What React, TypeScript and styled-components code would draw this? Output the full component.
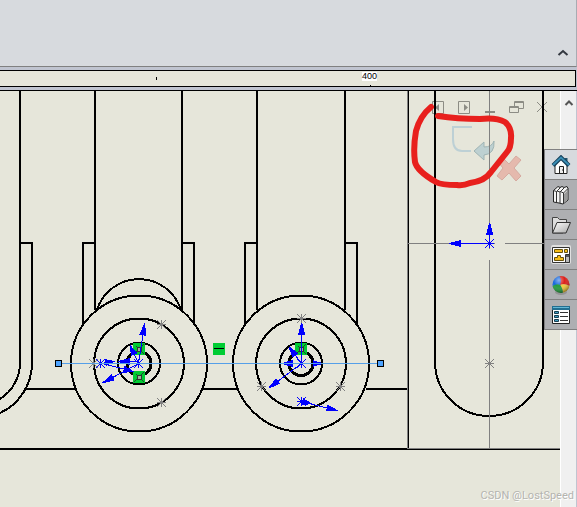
import React from 'react';
import styled, { createGlobalStyle } from 'styled-components';

const GlobalStyle = createGlobalStyle`
  * { box-sizing: border-box; }
  body { margin: 0; font-family: "Liberation Sans", Arial, sans-serif; }
`;

const Window = styled.div`
  position: relative;
  display: flex;
  flex-direction: column;
  height: 100vh;
  overflow: hidden;
  background: #c0c4d0;
`;

const CommandBar = styled.header`
  display: flex;
  flex: none;
  align-items: flex-end;
  justify-content: flex-end;
  height: 67px;
  padding: 0 4px 4px 0;
  background: #d7dade;
  border-bottom: 1px solid #808080;
  border-right: 1px solid #a8abb2;
`;

const PlainButton = styled.button<{ $width: number; $height: number }>`
  display: flex;
  flex: none;
  align-items: center;
  justify-content: center;
  width: ${(p) => p.$width}px;
  height: ${(p) => p.$height}px;
  padding: 0;
  border: 0;
  background: transparent;
`;

const Ruler = styled.div`
  display: flex;
  flex: none;
  height: 17px;
  margin: 3px 1px 3px 0;
  background: #e6e6da;
  border: 1px solid #000;
  border-left: 0;
`;

const RulerMinor = styled.div`
  display: flex;
  align-items: center;
  justify-content: flex-end;
  width: 157px;
  &::after { content: ""; width: 1px; height: 3px; background: #000; }
`;

const RulerMajor = styled.div`
  display: flex;
  flex-direction: column;
  align-items: flex-end;
  justify-content: space-between;
  width: 220px;
  font-size: 9px;
  line-height: 9px;
  &::after { content: ""; width: 1px; height: 1px; margin-right: 6px; background: #000; }
`;

const RulerLabel = styled.span`
  margin-top: 1px;
  background: #fff;
`;

const Workspace = styled.div`
  display: flex;
  flex: 1;
  min-height: 0;
  border-top: 1px solid #000;
`;

const Viewport = styled.main`
  position: relative;
  flex: 1;
  min-width: 0;
  overflow: hidden;
  background: #e6e6da;
`;

const Layer = styled.svg`
  position: absolute;
  top: 0;
  left: 0;
  pointer-events: none;
`;

const DocumentControls = styled.div`
  position: absolute;
  top: 5px;
  right: 5px;
  display: flex;
`;

const ConfirmCorner = styled.div`
  position: absolute;
  top: 33px;
  right: 35px;
  display: flex;
  align-items: flex-start;
`;

const ScrollBar = styled.aside`
  display: flex;
  flex: none;
  justify-content: center;
  width: 17px;
  padding-top: 4px;
  background: #f0f0f0;
  border-left: 1px solid #fff;
  border-right: 1px solid #c0c4d0;
`;

const TaskPane = styled.nav`
  position: absolute;
  top: 149px;
  right: 0;
  width: 33px;
  border-top: 1px solid #808080;
  border-left: 1px solid #808080;
`;

const TaskTab = styled.button<{ $active?: boolean }>`
  display: flex;
  align-items: center;
  justify-content: center;
  width: 100%;
  height: 30px;
  padding: 0;
  border: 0;
  border-bottom: 1px solid #808080;
  background: ${(p) => (p.$active ? '#d7dade' : '#aeafb2')};
`;

const Watermark = styled.div`
  position: absolute;
  right: 3px;
  bottom: 3px;
  color: #b4b4b0;
  font-family: Roboto, "Liberation Sans", sans-serif;
  font-size: 11px;
  line-height: 16px;
  text-shadow: 1px 1px 0 #fff;
`;

type Point = [number, number];

const Star = ({ at: [x, y], color = '#808080' }: { at: Point; color?: string }) => (
  <path
    d={`M${x - 4} ${y + 0.5}h9M${x + 0.5} ${y - 4}v9M${x - 4} ${y - 4}l9 9M${x + 5} ${y - 4}l-9 9`}
    stroke={color}
    fill="none"
  />
);

const Arrow = ({ from, to, head = 11 }: { from: Point; to: Point; head?: number }) => {
  const dx = to[0] - from[0];
  const dy = to[1] - from[1];
  const len = Math.hypot(dx, dy);
  const angle = (Math.atan2(dy, dx) * 180) / Math.PI;
  return (
    <g transform={`translate(${from[0] + 0.5} ${from[1] + 0.5}) rotate(${angle})`} fill="#00f" stroke="#00f">
      <path d={`M0 0H${len - head}`} />
      <path d={`M${len + 1} -.5v1l${-head - 1} 3v-7z`} stroke="none" />
    </g>
  );
};

const Wheel = ({ cx }: { cx: number }) => (
  <g fill="none" stroke="#000" strokeWidth="2">
    <circle cx={cx} cy="363.5" r="68" />
    <circle cx={cx} cy="363.5" r="45" />
    <circle cx={cx} cy="363.5" r="21" />
    <circle cx={cx} cy="363.5" r="12" strokeWidth="3" />
  </g>
);

const Relation = ({ x, y }: { x: number; y: number }) => (
  <g>
    <path d={`M${x} ${y}h12v12h-12z`} fill="#00cc33" />
    <path d={`M${x + 1} ${y + 11}l10 -10M${x + 3} ${y + 3}l8 8`} stroke="#24452b" />
    <rect x={x + 4.5} y={y + 4.5} width="4" height="4" fill="#9ab39a" stroke="#333" />
  </g>
);

const Drawing = () => (
  <Layer width="560" height="416" viewBox="0 91 560 416" shapeRendering="crispEdges">
    <g fill="none" stroke="#000" strokeWidth="2">
      <path d="M20 91V363A43 43 0 0 1 0 399M20 243H32V363A55 55 0 0 1 0 413" />
      <path d="M95 91V310M182 91V310M95 243H83V324M182 243H194V324" />
      <path d="M257 91V310M345 91V310M257 243H245V324M345 243H357V324" />
      <path d="M97 310A44 44 0 0 1 181 310" />
      <path d="M26 389H75M203 389H237M366 389H407M0 449H408" />
      <path d="M435 91V362A54 54 0 0 0 543 362V91" />
    </g>
    <path d="M408.5 91V449.5H560" fill="none" stroke="#000" />
    <path d="M407.5 91V448.5M408 448.5H560M489.5 91V249M489.5 260V448M408 243.5H495M505 243.5H544" fill="none" stroke="#808080" />
    <Wheel cx={139} />
    <Wheel cx={301} />
    {([[161, 324], [161, 402], [93, 363], [301, 318], [261, 386], [340, 386], [489, 363]] as Point[]).map((p) => (
      <Star key={p.join()} at={p} />
    ))}
    <Relation x={133} y={343} />
    <Relation x={133} y={371} />
    <Relation x={295} y={343} />
    <path d="M213 343h12v12h-12z" fill="#00cc33" />
    <path d="M214 348.5h10" stroke="#000" />
    <Arrow from={[138, 363]} to={[144, 324]} />
    <Arrow from={[138, 363]} to={[130, 346]} head={9} />
    <Arrow from={[138, 363]} to={[103, 382]} />
    <Arrow from={[138, 361]} to={[118, 361]} />
    <Arrow from={[100, 363]} to={[113, 361]} head={8} />
    <Arrow from={[100, 363]} to={[132, 371]} head={9} />
    <Arrow from={[301, 363]} to={[301, 323]} />
    <Arrow from={[301, 363]} to={[289, 347]} head={10} />
    <Arrow from={[301, 363]} to={[269, 387]} />
    <Arrow from={[301, 363]} to={[283, 363]} head={9} />
    <Arrow from={[301, 363]} to={[321, 363]} head={9} />
    <Arrow from={[301, 401]} to={[310, 403]} head={8} />
    <Arrow from={[301, 401]} to={[336, 410]} head={10} />
    <Arrow from={[489, 243]} to={[489, 223]} />
    <Arrow from={[489, 243]} to={[449, 243]} />
    {([[100, 363], [138, 363], [301, 363], [301, 401], [489, 243]] as Point[]).map((p) => (
      <Star key={p.join()} at={p} color="#00f" />
    ))}
    <path d="M62 363.5H377" stroke="#559fe8" />
    <g fill="#4da3ff" stroke="#000">
      <rect x="55.5" y="360.5" width="6" height="6" />
      <rect x="377.5" y="360.5" width="6" height="6" />
    </g>
  </Layer>
);

const controls: { label: string; path: string; solid?: string }[] = [
  { label: 'Collapse left pane', path: 'M2.5 2.5h11v12h-11z', solid: 'M9 5v7L5 8.5z' },
  { label: 'Collapse right pane', path: 'M2.5 2.5h11v12h-11z', solid: 'M8 5v7l4-3.5z' },
  { label: 'Minimize', path: 'M3 12.5h10M3 13.5h10' },
  { label: 'Restore', path: 'M6.5 7V2.5h9v7h-5M6 3.5h10M1.5 7.5h9v6h-9zM1 8.5h10' },
  { label: 'Close', path: 'M3 3l10 10M13 3L3 13' },
];

const HouseIcon = () => (
  <svg width="20" height="20" viewBox="0 0 20 20">
    <path d="M4 10v8.500h12V10l-6-6z" fill="#fff" stroke="#222" />
    <path d="M8.500 18v-6.500h4V18" fill="#eee" stroke="#222" />
    <path d="M11 15h1" stroke="#222" />
    <path d="M13.500 3h3v5l-3-3z" fill="#24546e" />
    <path d="M2 10.500L10 2.500l8 8" fill="none" stroke="#153f59" strokeWidth="4" />
    <path d="M2 10L10 2.500l8 7.500" fill="none" stroke="#3a8eb5" strokeWidth="2" />
  </svg>
);

const BooksIcon = () => (
  <svg width="20" height="20" viewBox="0 0 20 20" strokeLinejoin="round">
    <path d="M2.500 5.500L7 1.500l2 1 2-1 2 1 3-1 1 2V15l-5 4-4-1-5.500-1z" fill="#f5f5f5" stroke="#222" />
    <path d="M2.500 5.500l3 1v11M5.500 6.500l4-4M6 6l3 1v11M9 7l4-4M9.500 6.500l3 1.500v11M12.500 8L17 3.500" fill="none" stroke="#333" />
    <path d="M13 9l3-3v9l-3 3z" fill="#999" />
  </svg>
);

const FolderIcon = () => (
  <svg width="20" height="20" viewBox="0 0 20 20">
    <defs>
      <linearGradient id="folder" x2="1" y2="1">
        <stop stopColor="#fff" />
        <stop offset="1" stopColor="#aaa" />
      </linearGradient>
    </defs>
    <path d="M1.500 18V2.500h5l2 2h7V8L12 18z" fill="#ddd" stroke="#444" />
    <path d="M1.500 18L6 7.500h13.500L15 18z" fill="url(#folder)" stroke="#333" />
  </svg>
);

const PaletteIcon = () => (
  <svg width="20" height="20" viewBox="0 0 20 20">
    <rect width="20" height="19" rx="2" fill="#e0e0e0" />
    <path d="M1.500 2.500h17v15h-17z" fill="#fff" stroke="#333" />
    <path d="M3.500 4.500h8v3h-8zM13.500 4.500h3v3h-3zM6.500 10.500h3v2h3v3h-9v-3h3z" fill="#f5bd16" stroke="#65500c" />
    <path d="M14.500 9.500h4v8h-4z" fill="#bbb" stroke="#333" />
    <path d="M15 10h3v2h-3z" fill="#555" />
  </svg>
);

const BallIcon = () => (
  <svg width="20" height="20" viewBox="0 0 20 20">
    <defs>
      <radialGradient id="gloss" cx=".38" cy=".25" r=".75">
        <stop stopColor="#fff" stopOpacity=".5" />
        <stop offset=".45" stopColor="#fff" stopOpacity="0" />
        <stop offset="1" stopOpacity=".4" />
      </radialGradient>
      <clipPath id="ball">
        <circle cx="10" cy="9.500" r="8.500" />
      </clipPath>
    </defs>
    <ellipse cx="10" cy="17" rx="6" ry="3" fill="#777" opacity=".5" />
    <g clipPath="url(#ball)">
      <path d="M0 0h10v12H0z" fill="#1768dc" />
      <path d="M8 0h12v12Q14 8 9 10Q11 5 8 0z" fill="#dc211c" />
      <path d="M9 10Q14 8 20 12v8h-8Q12 13 9 10z" fill="#f4cb3c" />
      <path d="M0 12Q6 8 9 10Q12 13 12 20H0z" fill="#229c3c" />
    </g>
    <circle cx="10" cy="9.500" r="8.500" fill="url(#gloss)" />
  </svg>
);

const ListIcon = () => (
  <svg width="20" height="20" viewBox="0 0 20 20">
    <path d="M1.500 1.500h17v17h-17z" fill="#fff" stroke="#222" />
    <path d="M1 1h18v4H1z" fill="#236f91" />
    <path d="M2 2h16v1H2z" fill="#63b7d6" />
    <path d="M3.500 6.500h4v2h-4zM3.500 10.500h4v2h-4zM3.500 14.500h4v2h-4z" fill="#3f9cc1" stroke="#173d50" />
    <path d="M9 7.500h8M9 11.500h8M9 15.500h8" stroke="#333" />
  </svg>
);

const tabs = [
  { label: 'Resources', Icon: HouseIcon },
  { label: 'Design Library', Icon: BooksIcon },
  { label: 'File Explorer', Icon: FolderIcon },
  { label: 'View Palette', Icon: PaletteIcon },
  { label: 'Appearances', Icon: BallIcon },
  { label: 'Custom Properties', Icon: ListIcon },
];

export default function App() {
  return (
    <Window>
      <GlobalStyle />
      <CommandBar>
        <PlainButton $width={18} $height={18} aria-label="Collapse toolbar">
          <svg width="12" height="8" viewBox="0 0 12 8">
            <path d="M1.500 6L6 2l4.500 4" fill="none" stroke="#333840" strokeWidth="2" />
          </svg>
        </PlainButton>
      </CommandBar>
      <Ruler>
        <RulerMinor />
        <RulerMajor>
          <RulerLabel>400</RulerLabel>
        </RulerMajor>
      </Ruler>
      <Workspace>
        <Viewport>
          <DocumentControls>
            {controls.map(({ label, path, solid }) => (
              <PlainButton key={label} $width={26} $height={22} aria-label={label}>
                <svg width="16" height="16" viewBox="0 0 16 16" fill="none" stroke="#8c8c84">
                  <path d={path} />
                  {solid && <path d={solid} fill="#8c8c84" stroke="none" />}
                </svg>
              </PlainButton>
            ))}
          </DocumentControls>
          <ConfirmCorner>
            <PlainButton $width={48} $height={40} aria-label="Exit sketch">
              <svg width="48" height="40" viewBox="0 0 48 40">
                <path d="M25 3H6v12q0 12 9 12h9" fill="none" stroke="#bdd0d5" strokeWidth="2" />
                <path d="M27 27l10-9v5q8 0 10-6q1 13-10 14v5z" fill="#bdd0d1" stroke="#9fb4b4" />
              </svg>
            </PlainButton>
            <PlainButton $width={30} $height={58} aria-label="Cancel sketch">
              <svg width="30" height="58" viewBox="0 0 30 58">
                <path d="M2 37l5-4 7 7 7-8 5 4-7 8 7 8-5 5-7-8-7 7-5-4 6-8z" fill="#e5b9ad" stroke="#d6aaa0" />
              </svg>
            </PlainButton>
          </ConfirmCorner>
          <Drawing />
          <Layer width="560" height="416" viewBox="0 91 560 416">
            <path
              d="M431 107Q420 116 416 131Q413 148 415 162Q417 171 436 182Q441 185 457 185Q463 186 470 183Q485 181 491 172L507 152Q511 148 511 138Q512 128 505 122Q496 117 480 119Q457 119 438 116"
              fill="none"
              stroke="#e8201d"
              strokeWidth="6"
              strokeLinecap="round"
              strokeLinejoin="round"
            />
          </Layer>
        </Viewport>
        <ScrollBar aria-label="Vertical scroll">
          <PlainButton $width={15} $height={15} aria-label="Scroll up">
            <svg width="10" height="8" viewBox="0 0 10 8">
              <path d="M1.500 6L5 2.500 8.500 6" fill="none" stroke="#555" strokeWidth="2" />
            </svg>
          </PlainButton>
        </ScrollBar>
      </Workspace>
      <TaskPane aria-label="Task pane">
        {tabs.map(({ label, Icon }, i) => (
          <TaskTab key={label} $active={i === 0} aria-label={label}>
            <Icon />
          </TaskTab>
        ))}
      </TaskPane>
      <Watermark>CSDN @LostSpeed</Watermark>
    </Window>
  );
}
